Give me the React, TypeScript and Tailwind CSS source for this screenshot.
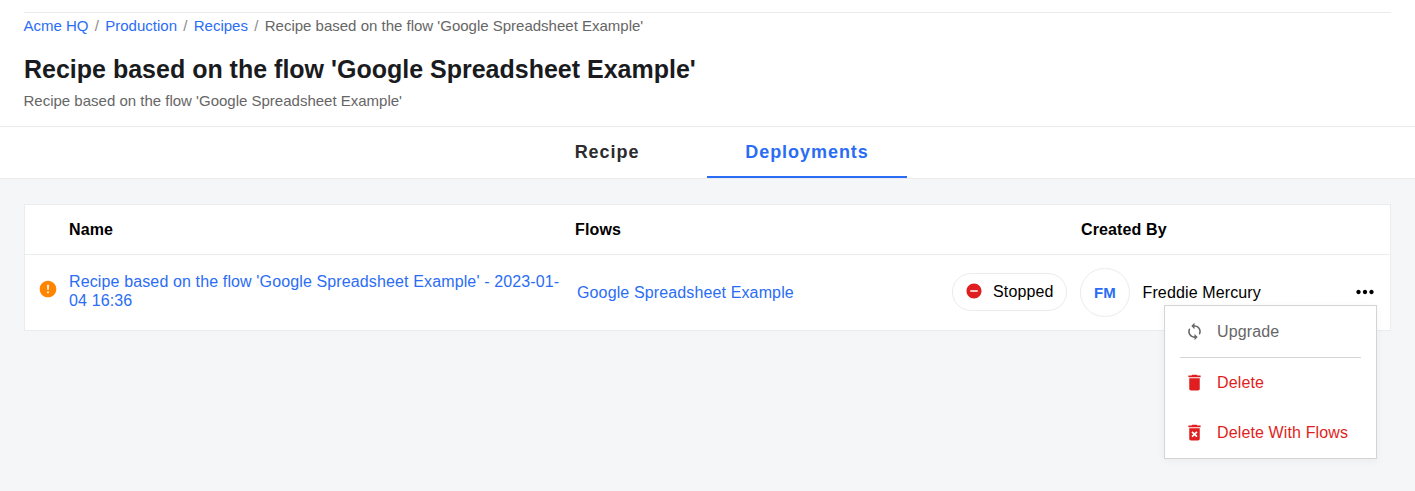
import React from 'react';
import { MdDelete, MdDeleteForever, MdError, MdMoreHoriz, MdRemoveCircle, MdSync } from 'react-icons/md';

const NAME = "Recipe based on the flow 'Google Spreadsheet Example'";

function Breadcrumbs() {
  return (
    <nav className="-ml-[0.5px] flex h-[26px] items-center whitespace-pre border-t border-[#ebebeb] text-[15px] leading-[17px] text-[#666]">
      {['Acme HQ', 'Production', 'Recipes'].map((label) => (
        <React.Fragment key={label}>
          <a className="text-[#2a6df4]">{label}</a>
          <span className="mx-[6.3px] text-[#8c8c8c]">/</span>
        </React.Fragment>
      ))}
      <span>{NAME}</span>
    </nav>
  );
}

function ActionsMenu() {
  return (
    <div className="absolute right-[13px] top-[50px] z-10 h-[154px] w-[213px] border border-[#d4d4d5] bg-white px-[15px] shadow-[0_2px_8px_rgba(34,36,38,0.05)]">
      <div className="flex h-[52px] items-center border-b border-[#d4d4d5] pl-[5px] text-[#666]">
        <MdSync size={19} className="mb-px shrink-0" />
        <span className="ml-[13px]">Upgrade</span>
      </div>
      <div className="flex h-[50px] items-center pl-1 text-[#e01e20]">
        <MdDelete size={21} className="mb-px shrink-0" />
        <span className="ml-3">Delete</span>
      </div>
      <div className="flex h-[50px] items-center pl-1 text-[#e01e20]">
        <MdDeleteForever size={21} className="mb-px shrink-0" />
        <span className="ml-3 whitespace-nowrap">Delete With Flows</span>
      </div>
    </div>
  );
}

function DeploymentsTable() {
  return (
    <section className="border border-[#ebecee] bg-white tracking-[0.13px] text-black">
      <div className="flex h-[50px] items-center border-b border-[#ebecee] pl-11 font-bold">
        <div className="w-[506px]">Name</div>
        <div className="w-[506px]">Flows</div>
        <div>Created By</div>
      </div>
      <div className="relative flex h-[75px] items-center">
        <div className="flex w-11 items-center pb-[7px] pl-[13px]">
          <MdError size={20} className="text-[#ff8400]" />
        </div>
        <a className="w-[508px] pb-[3px] pr-3 leading-[19px] text-[#2a6df4]">{NAME} - 2023-01-04 16:36</a>
        <a className="w-[375px] text-[#2a6df4]">Google Spreadsheet Example</a>
        <div className="mb-0.5 flex h-[38px] w-[115px] items-center rounded-full border border-[#ebebeb] pl-3">
          <MdRemoveCircle size={18} className="mb-0.5 text-[#e01e20]" />
          <span className="ml-2.5">Stopped</span>
        </div>
        <div className="mb-px ml-[13px] flex h-[49px] w-[50px] items-center justify-center rounded-full border border-[#ebebeb] pt-px text-[15px] font-bold text-[#2a6df4]">
          FM
        </div>
        <span className="ml-[12.5px]">Freddie Mercury</span>
        <MdMoreHoriz size={26} className="mb-px ml-auto mr-3" />
        <ActionsMenu />
      </div>
    </section>
  );
}

export default function App() {
  return (
    <div className="flex h-[491px] flex-col overflow-hidden bg-[#f5f6f8] text-base leading-[18px]" style={{ fontFamily: '"Liberation Sans", Arial, sans-serif' }}>
      <header className="h-[127px] border-b border-[#ebebeb] bg-white px-6 pt-3">
        <Breadcrumbs />
        <h1 className="mt-4 text-[25px] font-bold leading-[30px] text-[#1a1b1e]">{NAME}</h1>
        <p className="-ml-[0.5px] mt-2 text-[15px] leading-[17px] text-[#666]">{NAME}</p>
      </header>
      <div className="flex h-[52px] justify-center border-b border-[#ebebeb] bg-white pr-px text-lg font-bold tracking-[0.95px]">
        <div className="flex w-[200px] items-center justify-center pb-px text-[#2b2b2d]">Recipe</div>
        <div className="flex w-[200px] items-center justify-center border-b-2 border-[#2a6df4] pt-px text-[#2a6df4]">Deployments</div>
      </div>
      <main className="px-6 pt-[25px]">
        <DeploymentsTable />
      </main>
    </div>
  );
}
